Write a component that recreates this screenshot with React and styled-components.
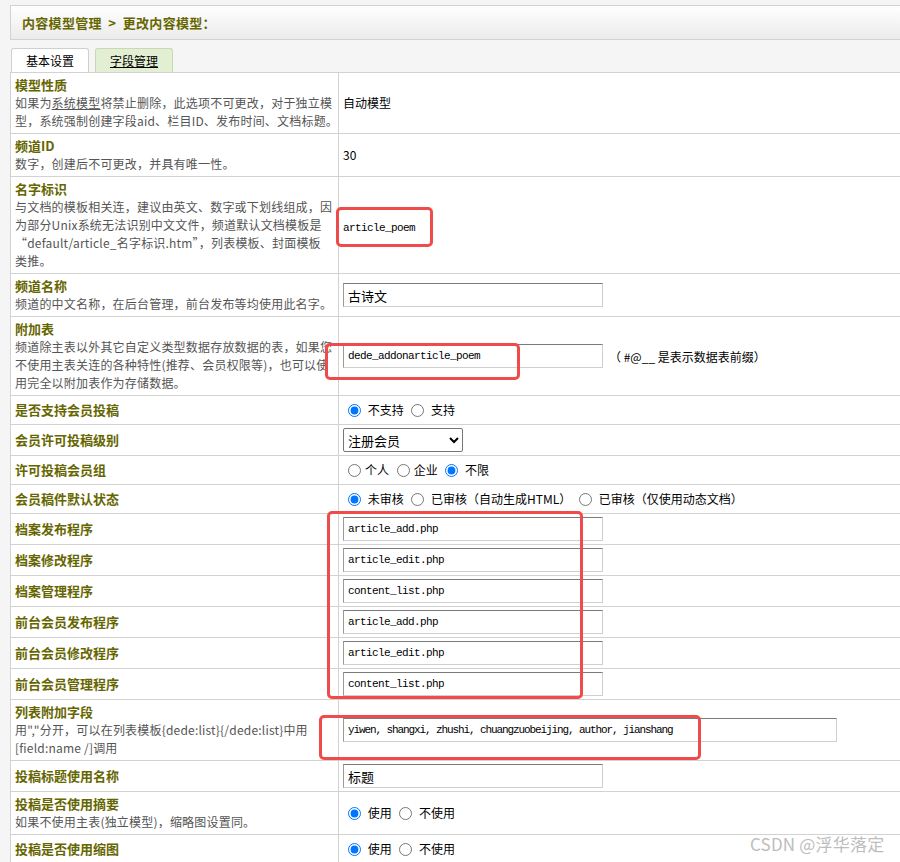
import React from 'react';
import styled, { createGlobalStyle } from 'styled-components';

const GlobalStyle = createGlobalStyle`
  html, body {
    margin: 0;
    padding: 0;
    background: #f5f5f5;
    overflow: hidden;
  }
  body {
    font-family: "Noto Sans CJK SC", "Liberation Sans", sans-serif;
    font-size: 12px;
    color: #000;
  }
`;

const Page = styled.div`
  position: relative;
  width: 900px;
  height: 862px;
  padding: 5px 0 0 10px;
  box-sizing: border-box;
`;

const Frame = styled.div`
  width: 896px;
`;

const HeadBar = styled.div`
  height: 33px;
  border: 1px solid #d2d2d2;
  background: linear-gradient(#ffffff, #ebebeb);
  display: flex;
  align-items: center;
  padding-left: 11px;
  font-size: 13px;
  font-weight: bold;
  color: #666600;
  letter-spacing: 0.3px;
  white-space: pre;
`;

const Tabs = styled.div`
  display: flex;
  gap: 6px;
  padding: 8px 0 0 1px;
`;

const Tab = styled.div`
  width: 76px;
  height: 23px;
  border: 1px solid ${p => (p.$active ? '#c9d8b4' : '#cfcfcf')};
  border-bottom: none;
  border-radius: 3px 3px 0 0;
  background: ${p => (p.$active ? '#e2efd3' : '#ffffff')};
  display: flex;
  align-items: center;
  justify-content: center;
  font-size: 12px;
  text-decoration: ${p => (p.$active ? 'underline' : 'none')};
`;

const Table = styled.table`
  width: 100%;
  table-layout: fixed;
  border-collapse: collapse;
  background: #fff;
  border: 1px solid #d2d2d2;
`;

const LabelCol = styled.col`
  width: 328px;
`;

const LabelCell = styled.td`
  padding: 3px 4px;
  border: 1px solid #d2d2d2;
  vertical-align: middle;
  white-space: nowrap;
  overflow: hidden;
`;

const ValueCell = styled.td`
  padding: 3px 4px;
  border: 1px solid #d2d2d2;
  vertical-align: middle;
  white-space: nowrap;
  font-size: 12px;
`;

const Title = styled.div`
  font-size: 13px;
  font-weight: bold;
  line-height: 18px;
  color: #666600;
`;

const Note = styled.div`
  font-size: 12px;
  line-height: 18px;
  color: #555;
  letter-spacing: 0.2px;
`;

const Under = styled.span`
  text-decoration: underline;
`;

const Plain = styled.div`
  line-height: 18px;
  font-size: 12px;
`;

const Mono = styled.span`
  font-family: "Liberation Mono", "Noto Sans CJK SC", monospace;
  font-size: 11px;
  letter-spacing: -0.6px;
`;

const TextInput = styled.input`
  box-sizing: border-box;
  width: ${p => p.$w || 260}px;
  height: 24px;
  margin: 0;
  padding: 0 4px;
  border: 1px solid #cfcfcf;
  border-top-color: #7a7a7a;
  border-left-color: #9a9a9a;
  background: #fff;
  vertical-align: middle;
  color: #000;
  font-family: ${p => (p.$cjk ? '"Noto Sans CJK SC", sans-serif' : '"Liberation Mono", "Noto Sans CJK SC", monospace')};
  font-size: ${p => (p.$cjk ? '13px' : '11px')};
  letter-spacing: ${p => (p.$cjk ? '0' : p.$tight ? '-1.1px' : '-0.6px')};
  outline: none;
`;

const Hint = styled.span`
  margin-left: 6px;
  font-size: 12px;
  vertical-align: middle;
`;

const RadioLine = styled.div`
  height: 22px;
  line-height: 22px;
  font-size: 12px;
`;

const Radio = styled.input.attrs({ type: 'radio' })`
  width: 13px;
  height: 13px;
  margin: 0 4px 0 5px;
  vertical-align: -2px;
`;

const Select = styled.select`
  width: 120px;
  height: 24px;
  margin: 0;
  font-family: "Noto Sans CJK SC", sans-serif;
  font-size: 13px;
  color: #000;
  background: #fff;
  border: 1px solid #767676;
  border-radius: 2px;
  vertical-align: middle;
`;

const Mark = styled.div`
  position: absolute;
  left: ${p => p.$x}px;
  top: ${p => p.$y}px;
  width: ${p => p.$w}px;
  height: ${p => p.$h}px;
  box-sizing: border-box;
  border: 3px solid #f04b4b;
  border-radius: 5px;
  pointer-events: none;
`;

const Watermark = styled.div`
  position: absolute;
  left: 750px;
  top: 831px;
  font-family: "Noto Sans CJK SC", "Liberation Sans", sans-serif;
  font-size: 17px;
  color: #bdbdbd;
  letter-spacing: 0.2px;
`;

const Row = ({ title, notes, children }) => (
  <tr>
    <LabelCell>
      <Title>{title}</Title>
      {notes && notes.map((n, i) => <Note key={i}>{n}</Note>)}
    </LabelCell>
    <ValueCell>{children}</ValueCell>
  </tr>
);

const programs = [
  ['档案发布程序', 'article_add.php'],
  ['档案修改程序', 'article_edit.php'],
  ['档案管理程序', 'content_list.php'],
  ['前台会员发布程序', 'article_add.php'],
  ['前台会员修改程序', 'article_edit.php'],
  ['前台会员管理程序', 'content_list.php'],
];

export default function App() {
  return (
    <Page>
      <GlobalStyle />
      <Frame>
        <HeadBar>内容模型管理  &gt;  更改内容模型：</HeadBar>
        <Tabs>
          <Tab>基本设置</Tab>
          <Tab $active>字段管理</Tab>
        </Tabs>
        <Table>
          <colgroup>
            <LabelCol />
            <col />
          </colgroup>
          <tbody>
            <Row
              title="模型性质"
              notes={[
                <>如果为<Under>系统模型</Under>将禁止删除，此选项不可更改，对于独立模</>,
                '型，系统强制创建字段aid、栏目ID、发布时间、文档标题。',
              ]}
            >
              <Plain>自动模型</Plain>
            </Row>
            <Row title="频道ID" notes={['数字，创建后不可更改，并具有唯一性。']}>
              <Plain>30</Plain>
            </Row>
            <Row
              title="名字标识"
              notes={[
                '与文档的模板相关连，建议由英文、数字或下划线组成，因',
                '为部分Unix系统无法识别中文文件，频道默认文档模板是',
                '“default/article_名字标识.htm”，列表模板、封面模板',
                '类推。',
              ]}
            >
              <Mono>article_poem</Mono>
            </Row>
            <Row title="频道名称" notes={['频道的中文名称，在后台管理，前台发布等均使用此名字。']}>
              <TextInput $cjk defaultValue="古诗文" />
            </Row>
            <Row
              title="附加表"
              notes={[
                '频道除主表以外其它自定义类型数据存放数据的表，如果您',
                '不使用主表关连的各种特性(推荐、会员权限等)，也可以使',
                '用完全以附加表作为存储数据。',
              ]}
            >
              <TextInput defaultValue="dede_addonarticle_poem" />
              <Hint>（ #@__ 是表示数据表前缀）</Hint>
            </Row>
            <Row title="是否支持会员投稿">
              <RadioLine>
                <Radio name="post" defaultChecked /> 不支持 <Radio name="post" /> 支持
              </RadioLine>
            </Row>
            <Row title="会员许可投稿级别">
              <Select defaultValue="reg">
                <option value="reg">注册会员</option>
              </Select>
            </Row>
            <Row title="许可投稿会员组">
              <RadioLine>
                <Radio name="grp" />个人 <Radio name="grp" />企业 <Radio name="grp" defaultChecked /> 不限
              </RadioLine>
            </Row>
            <Row title="会员稿件默认状态">
              <RadioLine>
                <Radio name="st" defaultChecked /> 未审核 <Radio name="st" /> 已审核（自动生成HTML） <Radio name="st" /> 已审核（仅使用动态文档）
              </RadioLine>
            </Row>
            {programs.map(([t, v], i) => (
              <Row key={i} title={t}>
                <TextInput defaultValue={v} />
              </Row>
            ))}
            <Row
              title="列表附加字段"
              notes={['用","分开，可以在列表模板{dede:list}{/dede:list}中用', '[field:name /]调用']}
            >
              <TextInput $w={494} $tight defaultValue="yiwen, shangxi, zhushi, chuangzuobeijing, author, jianshang" />
            </Row>
            <Row title="投稿标题使用名称">
              <TextInput $cjk defaultValue="标题" />
            </Row>
            <Row title="投稿是否使用摘要" notes={['如果不使用主表(独立模型)，缩略图设置同。']}>
              <RadioLine>
                <Radio name="sum" defaultChecked /> 使用 <Radio name="sum" /> 不使用
              </RadioLine>
            </Row>
            <Row title="投稿是否使用缩图">
              <RadioLine>
                <Radio name="pic" defaultChecked /> 使用 <Radio name="pic" /> 不使用
              </RadioLine>
            </Row>
          </tbody>
        </Table>
      </Frame>
      <Mark $x={336} $y={207} $w={97} $h={40} />
      <Mark $x={325} $y={343} $w={195} $h={37} />
      <Mark $x={327} $y={511} $w={256} $h={188} />
      <Mark $x={319} $y={715} $w={382} $h={45} />
      <Watermark>CSDN @浮华落定</Watermark>
    </Page>
  );
}
